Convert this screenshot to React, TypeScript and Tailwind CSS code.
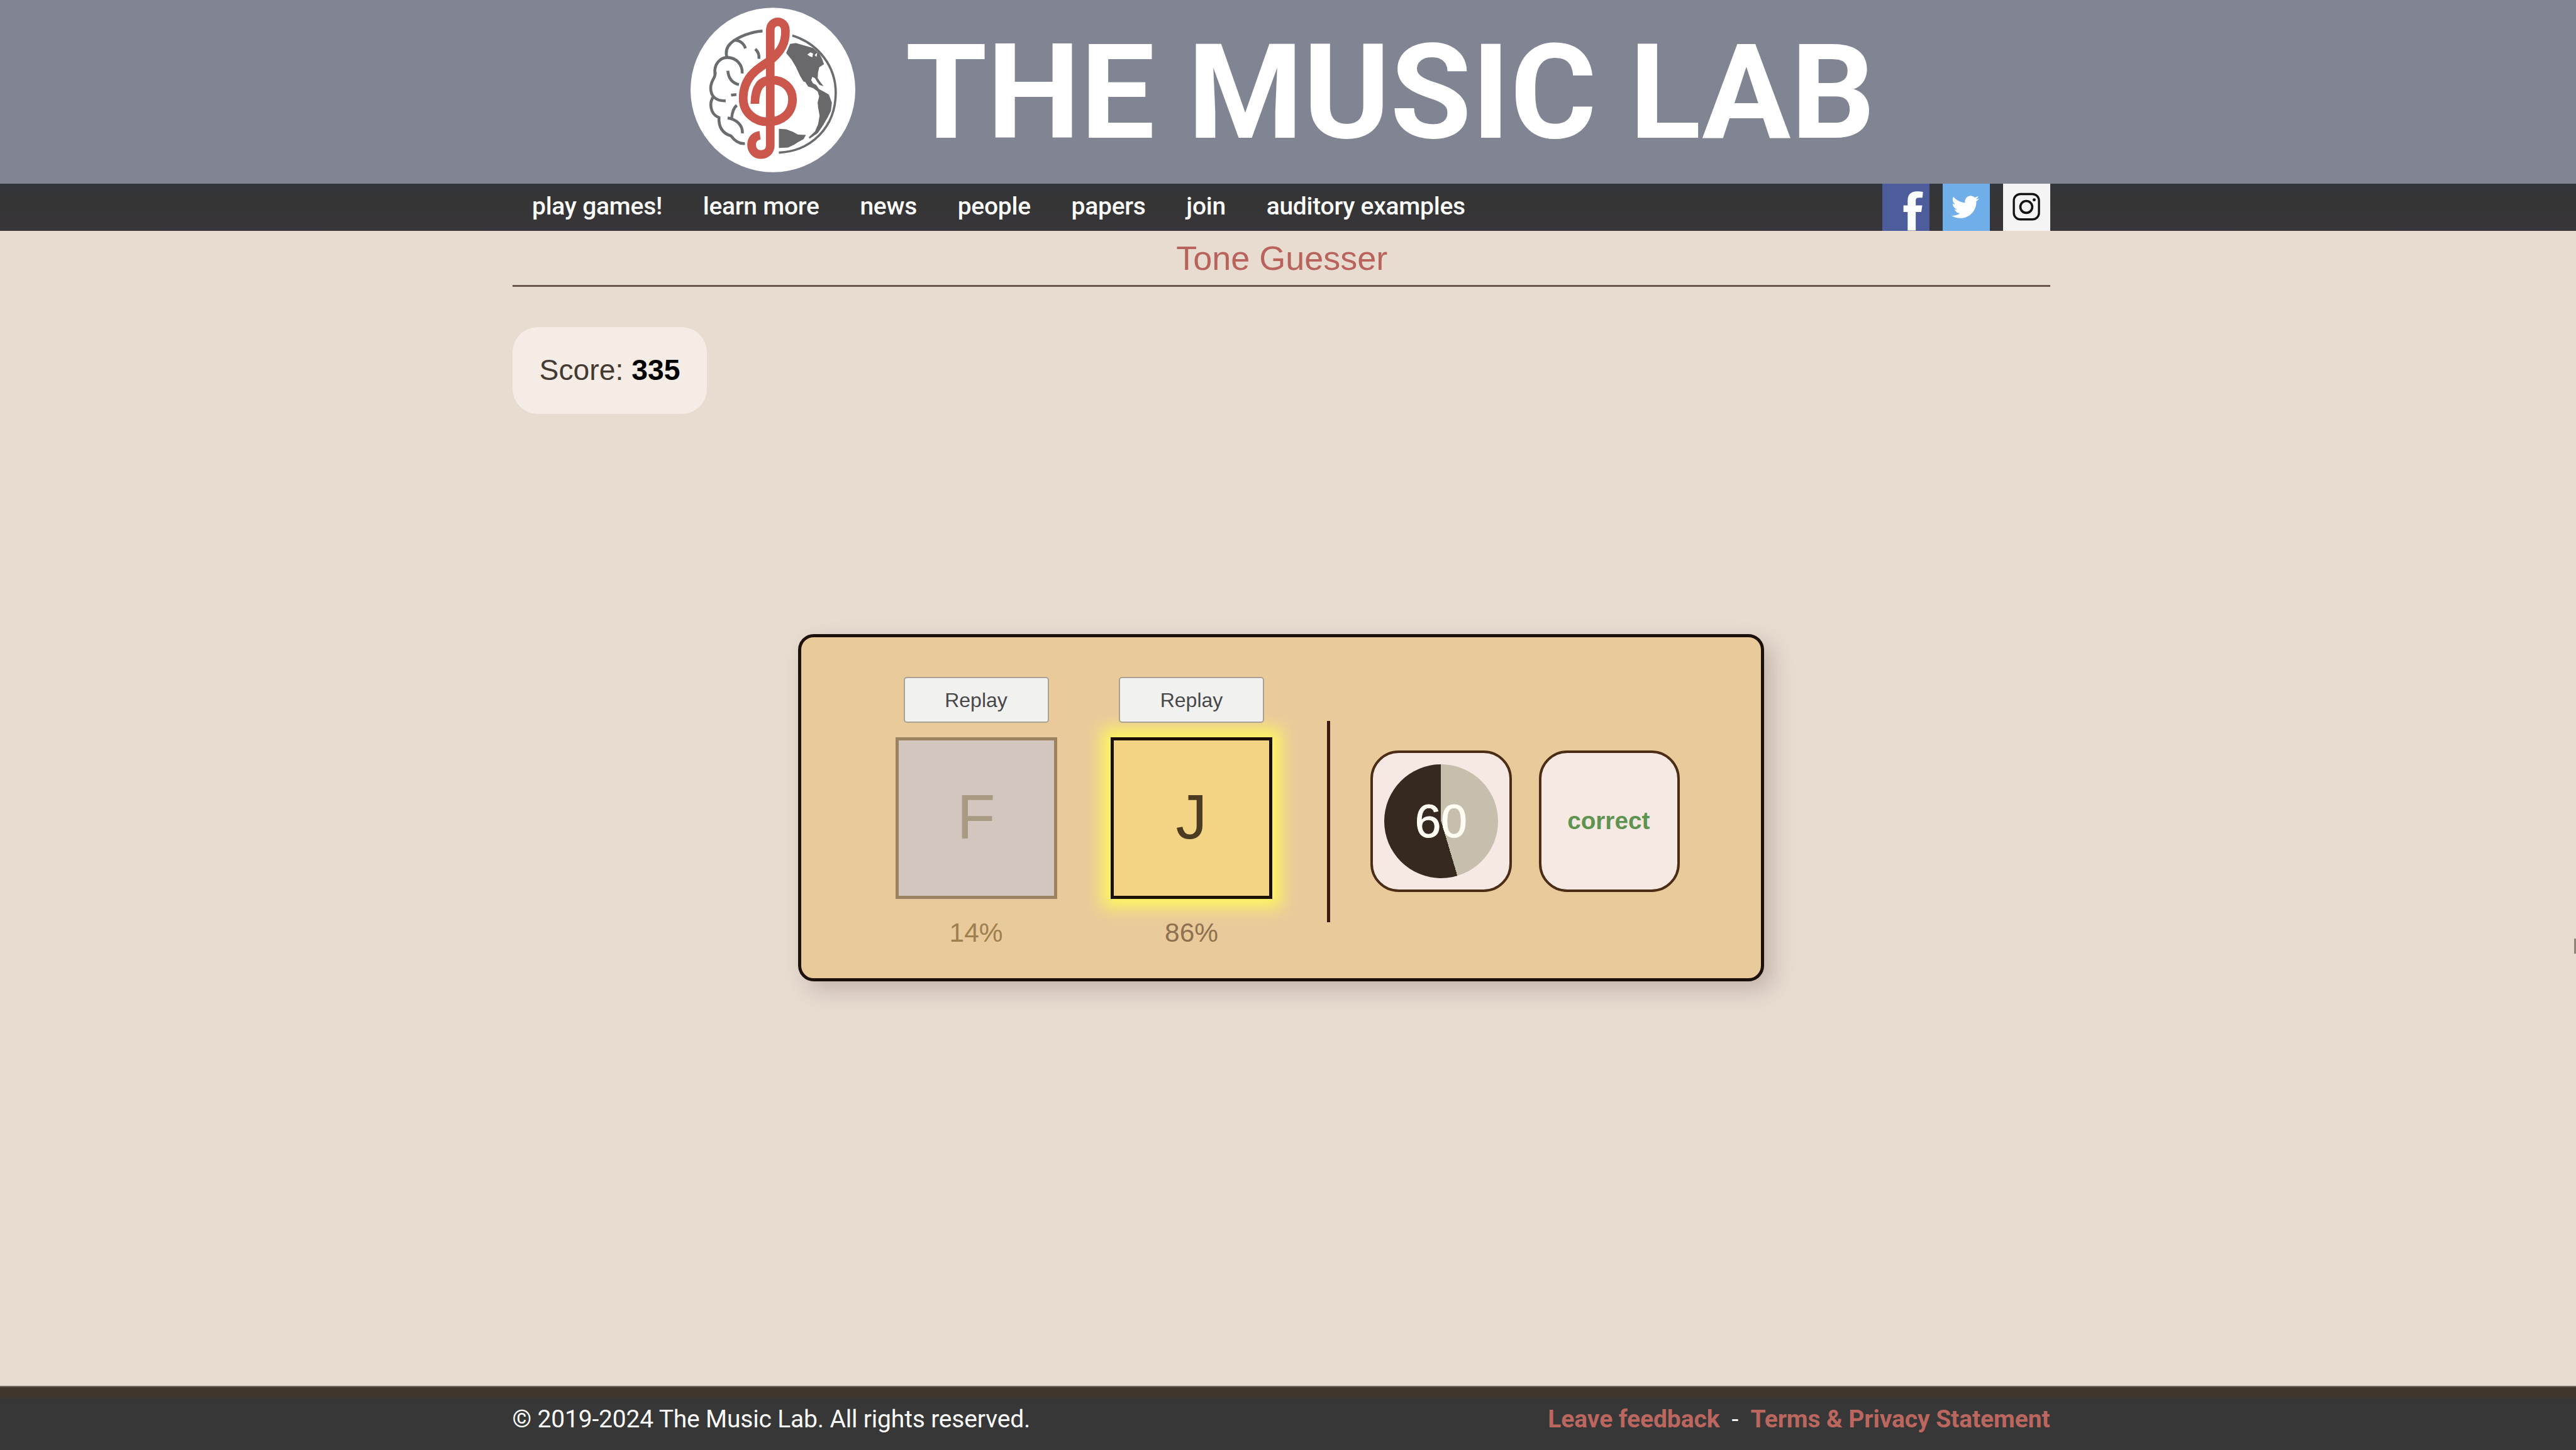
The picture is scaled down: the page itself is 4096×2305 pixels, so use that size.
import React from "react";
import { FaTwitter } from "react-icons/fa";

const NAV_ITEMS = ["play games!", "learn more", "news", "people", "papers", "join", "auditory examples"];

function Logo() {
  return (
    <svg viewBox="52 38 858 856" className="h-[262px] w-[262px] shrink-0" fill="none">
      <ellipse cx="481" cy="466" rx="429" ry="428" fill="#ffffff" />
      <g stroke="#6a6d70" strokeWidth="15">
        <path d="M427 159C370 163 300 188 262 222C238 245 232 270 243 300" />
        <path d="M278 208C306 204 330 224 338 250" />
        <path d="M179 385C172 330 208 297 243 297C290 297 324 335 321 380" />
        <path d="M180 372C186 402 158 412 157 455C157 500 185 525 235 522" />
        <path d="M172 500C148 530 152 590 200 610C198 660 220 692 262 705C285 735 310 748 335 745" />
        <path d="M246 366C250 408 270 430 304 438" />
        <path d="M389 253C403 265 410 285 408 304" />
        <path d="M263 493L291 490" />
        <path d="M293 546C275 560 268 590 266 614" />
        <path d="M245 612C288 618 325 648 322 692" />
      </g>
      <path d="M582 183C720 225 808 345 808 480C808 660 680 785 512 792" stroke="#6a6d70" strokeWidth="12" />
      <g fill="#69696b">
        <path d="M570 226L600 222L650 236L690 247L722 275L735 300L747 332L722 348L716 375L714 405L728 425L745 446L725 441L712 425L700 405L686 398L680 415L690 432L706 440L722 462L745 474L772 490L788 532L783 575L768 605L742 650L715 690L672 720L668 712L700 682L716 645L724 600L716 555L714 530L722 500L714 474L690 456L664 448L650 425L640 422L622 392L600 345L578 308L550 274Z" />
        <path d="M512 668L550 671L585 684L610 698L653 700L640 722L612 738L590 752L560 766L512 768Z" />
      </g>
      <path d="M660 282L676 270L690 276L686 296L672 290ZM698 284L712 272L708 294ZM716 456L736 446L762 460L740 466Z" fill="#ffffff" />
      <g stroke="#ffffff" strokeWidth="62">
        <path d="M545 150C550 225 520 265 478 305C440 338 326 385 326 505" />
      </g>
      <g stroke="#cb564c" strokeWidth="45">
        <path d="M467 640V158C467 96 546 96 546 158C548 225 520 265 478 303C440 338 326 375 326 510C326 582 385 632 455 632C530 632 583 585 583 515C583 455 535 414 475 414C420 414 388 450 387 538" />
        <path d="M467 600V755C467 785 445 802 418 802C390 802 370 780 370 752C370 725 385 706 414 702" />
      </g>
    </svg>
  );
}

function SocialLinks() {
  return (
    <div className="flex gap-[21.5px]">
      <a className="block h-[74.5px] w-[74.5px] bg-[#4d5c9a]">
        <svg viewBox="73 55 244 244" className="h-full w-full">
          <path
            d="M205 299V202H183V168H205V143C205 112 222 95 252 95C266 95 278 96 285 98L282 128H264C250 128 247 135 247 146V168H281L276 202H247V299Z"
            fill="#fcfdff"
          />
        </svg>
      </a>
      <a className="flex h-[74.5px] w-[74.5px] items-center justify-center bg-[#70aeea] pr-[2px]">
        <FaTwitter className="h-[44px] w-[44px] text-[#fcfeff]" />
      </a>
      <a className="block h-[74.5px] w-[74.5px] bg-[#f5f4f4]">
        <svg viewBox="702 55 244 244" className="h-full w-full" fill="none" stroke="#131313">
          <rect x="758" y="109" width="131" height="132" rx="34" strokeWidth="11" />
          <circle cx="823" cy="176" r="31" strokeWidth="12" />
          <circle cx="864" cy="139" r="8" fill="#131313" stroke="none" />
        </svg>
      </a>
    </div>
  );
}

interface ToneProps {
  letter: string;
  percent: string;
  selected: boolean;
}

function Tone({ letter, percent, selected }: ToneProps) {
  return (
    <div className="flex w-[257px] flex-col items-center">
      <button className="relative z-10 flex h-[73px] w-[231px] items-center justify-center rounded-[5px] border-2 border-[#a9a294] bg-[#f1f1f0] text-[32px] leading-none text-[#48484a]">
        Replay
      </button>
      <div
        className={
          selected
            ? "mt-[22.5px] flex h-[257px] w-[257px] items-center justify-center border-[5px] border-[#1c1106] bg-[#f3d484] pb-[2px] text-[99.8px] leading-none text-[#4b3b20] shadow-[0_0_24px_14px_#fdf660]"
            : "mt-[22.5px] flex h-[257px] w-[257px] items-center justify-center border-[5px] border-[#9b8261] bg-[#d2c6bf] pb-[2px] text-[99.8px] leading-none text-[#a99a83]"
        }
      >
        {letter}
      </div>
      <div
        className={
          selected
            ? "mt-[32px] text-[42.4px] leading-[44px] text-[#8f7150]"
            : "mt-[32px] text-[42.4px] leading-[44px] text-[#9d7f50]"
        }
      >
        {percent}
      </div>
    </div>
  );
}

function Timer() {
  return (
    <div className="flex h-[225px] w-[224.5px] items-center justify-center rounded-[45px] border-[4px] border-[#4a2d14] bg-[#f6e9e3]">
      <div className="flex h-[181px] w-[181px] items-center justify-center rounded-full bg-[conic-gradient(#c6bfae_0_45.4%,#36291f_45.4%_100%)] text-[74.8px] leading-none text-[#fffcf4] [-webkit-text-stroke:1px_#fffcf4]">
        60
      </div>
    </div>
  );
}

export default function App() {
  return (
    <div className="relative flex h-[2305px] w-[4096px] flex-col overflow-hidden bg-[#e8dcd1] font-['Liberation_Sans',Arial,sans-serif]">
      <header className="flex h-[292px] items-start bg-[#818493] pl-[1097.5px] font-[Roboto,sans-serif]">
        <div className="mt-[11.5px]">
          <Logo />
        </div>
        <h1 className="mt-[42px] ml-[80px] text-[210px] leading-[210px] font-bold whitespace-nowrap text-white">THE MUSIC LAB</h1>
      </header>

      <nav className="flex h-[74.5px] justify-between bg-linear-to-b from-[#31363c] via-[#353535] via-35% to-[#38353a] pr-[836.5px] pl-[846px] font-[Roboto,sans-serif]">
        <ul className="flex items-center gap-[64.7px] pb-[2px] text-[39px] leading-none font-medium tracking-[-0.25px] whitespace-nowrap text-[#fbfbfb]">
          {NAV_ITEMS.map((item) => (
            <li key={item}>{item}</li>
          ))}
        </ul>
        <SocialLinks />
      </nav>

      <main className="ml-[815px] flex w-[2444.5px] flex-1 flex-col">
        <h2 className="flex h-[86.5px] items-center justify-center pl-[2px] text-[54px] leading-none text-[#b8635b]">Tone Guesser</h2>
        <hr className="h-[3px] border-0 bg-[#6a554a]" />
        <div className="mt-[63.5px] flex h-[138px] w-[309px] items-center justify-center rounded-[40px] bg-[#f5ece5] text-[46.3px] leading-none whitespace-pre text-[#453a32]">
          Score: <b className="text-black">335</b>
        </div>

        <section className="mt-[350.5px] ml-[454px] flex h-[552px] w-[1535.5px] rounded-[25px] border-[5px] border-[#1d110c] bg-[#e9ca9b] pt-[63px] pl-[149.5px] shadow-[14px_14px_36px_rgba(70,35,35,0.22)]">
          <div className="flex gap-[85.5px]">
            <Tone letter="F" percent="14%" selected={false} />
            <Tone letter="J" percent="86%" selected />
          </div>
          <div className="mt-[70px] ml-[87px] h-[319.5px] w-[4.5px] bg-[#3a1a12]" />
          <div className="mt-[117px] ml-[64.5px] flex gap-[43px]">
            <Timer />
            <div className="flex h-[225px] w-[224.5px] items-center justify-center rounded-[45px] border-[4px] border-[#4a2d14] bg-[#f6e9e3] pr-[2px] text-[38.7px] leading-none font-bold text-[#5f9350]">
              correct
            </div>
          </div>
        </section>
      </main>

      <footer className="flex h-[102.5px] items-center justify-between border-t-[2px] border-[#6e655b] bg-linear-to-b from-[#41362c] from-12% to-[#363736] to-22% pt-[4px] pr-[836.5px] pl-[814.5px] font-[Roboto,sans-serif] text-[39px] leading-none tracking-[-0.18px] whitespace-pre text-[#fafafa]">
        <p>© 2019-2024 The Music Lab. All rights reserved.</p>
        <p className="tracking-[-0.1px]">
          <a className="font-bold text-[#bb665f]">Leave feedback</a>
          {"  -  "}
          <a className="font-bold text-[#bb665f]">Terms &amp; Privacy Statement</a>
        </p>
      </footer>

      <div className="absolute top-[1492px] right-0 h-[24px] w-[3px] bg-[#8f8676]" />
    </div>
  );
}
